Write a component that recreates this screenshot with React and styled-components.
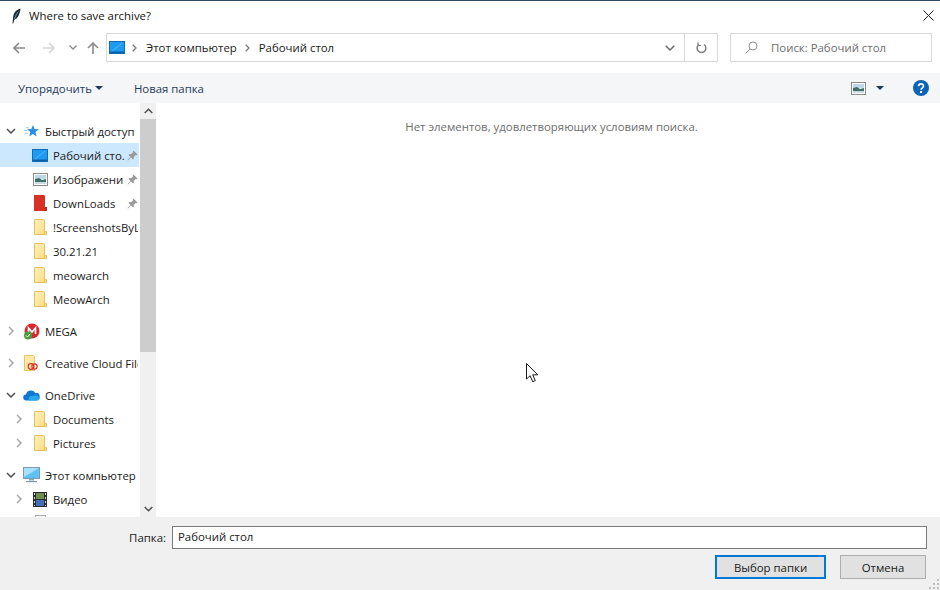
import React from "react";
import styled, { createGlobalStyle } from "styled-components";

const Global = createGlobalStyle`
  html, body { margin: 0; padding: 0; background: #fff; }
  body { font-family: "Open Sans", "Noto Sans", "Liberation Sans", sans-serif; font-size: 11.4px; color: #1a1a1a; }
  * { box-sizing: border-box; }
`;

const Dialog = styled.div`
  position: relative;
  width: 940px;
  height: 590px;
  display: flex;
  flex-direction: column;
  overflow: hidden;
  background: #fff;
  border-top: 1px solid #2b4a5e;
`;
const TitleBar = styled.div`
  height: 29px;
  display: flex;
  align-items: center;
  padding: 0 6px 0 12px;
  flex: none;
`;
const TitleText = styled.div`
  margin-left: 8px;
  flex: 1;
  color: #111;
`;
const NavBar = styled.div`
  height: 43px;
  display: flex;
  align-items: center;
  flex: none;
  padding: 0 8px 8px 13px;
`;
const NavButton = styled.div`
  display: flex;
  width: ${p => p.$w}px;
  margin-right: ${p => p.$mr || 0}px;
  flex: none;
`;
const AddressBox = styled.div`
  width: 612px;
  height: 29px;
  border: 1px solid #d9d9d9;
  display: flex;
  align-items: center;
  flex: none;
  padding-left: 2px;
`;
const Crumb = styled.span`
  color: #1a1a1a;
  margin: 0 8px 0 9px;
`;
const Spacer = styled.div`
  flex: 1;
`;
const AddressEnd = styled.div`
  width: 33px;
  height: 100%;
  border-left: 1px solid #d9d9d9;
  display: flex;
  align-items: center;
  justify-content: center;
  margin-left: 9px;
`;
const SearchBox = styled.div`
  width: 202px;
  height: 29px;
  margin-left: 12px;
  border: 1px solid #d9d9d9;
  display: flex;
  align-items: center;
  padding-left: 14px;
  color: #6d6d6d;
  flex: none;
`;
const SearchLabel = styled.span`
  margin-left: 13px;
`;
const Toolbar = styled.div`
  height: 30px;
  flex: none;
  background: #f5f6f7;
  display: flex;
  align-items: center;
  padding: 0 11px 0 18px;
  color: #1e3a5f;
`;
const ToolText = styled.span`
  margin: 0 ${p => p.$mr || 0}px 0 ${p => p.$ml || 0}px;
`;
const ToolCaret = styled.span`
  display: flex;
  margin: 0 ${p => p.$mr || 0}px 0 ${p => p.$ml || 0}px;
`;
const Main = styled.div`
  flex: 1;
  min-height: 0;
  display: flex;
  overflow: hidden;
`;
const Tree = styled.div`
  width: 140px;
  flex: none;
  overflow: hidden;
  padding-top: 16px;
`;
const Row = styled.div`
  height: 24px;
  display: flex;
  align-items: center;
  background: ${p => (p.$selected ? "#cce8ff" : "transparent")};
  margin-bottom: ${p => (p.$gap ? 8 : 0)}px;
  width: 139px;
  white-space: nowrap;
`;
const Arrow = styled.div`
  width: 10px;
  margin-left: ${p => (p.$sub ? 14 : 6)}px;
  flex: none;
  display: flex;
  justify-content: center;
`;
const IconSlot = styled.div`
  width: 20px;
  margin: 0 ${p => (p.$sub ? 3 : 4)}px 0 ${p => (p.$sub ? 6 : 5)}px;
  flex: none;
  display: flex;
  justify-content: center;
`;
const Label = styled.div`
  flex: 1;
  min-width: 0;
  overflow: hidden;
  color: #1a1a1a;
  margin-right: 1px;
`;
const PinSlot = styled.div`
  width: 12px;
  flex: none;
  display: flex;
  justify-content: flex-start;
`;
const Scrollbar = styled.div`
  width: 16px;
  flex: none;
  background: #f0f0f0;
  display: flex;
  flex-direction: column;
  align-items: center;
`;
const ScrollArrow = styled.div`
  height: 16px;
  flex: none;
  display: flex;
  align-items: center;
  justify-content: center;
`;
const Thumb = styled.div`
  width: 16px;
  height: 233px;
  background: #cdcdcd;
  flex: none;
`;
const Content = styled.div`
  flex: 1;
  margin-left: 2px;
  padding-top: 16px;
  text-align: center;
  color: #6d6d6d;
  padding-left: 5px;
`;
const Footer = styled.div`
  height: 73px;
  flex: none;
  background: #f0f0f0;
  padding: 9px 13px 0 0;
  display: flex;
  flex-direction: column;
  align-items: flex-end;
`;
const FieldRow = styled.div`
  display: flex;
  align-items: center;
`;
const FieldLabel = styled.span`
  margin-right: 6px;
`;
const Field = styled.div`
  width: 755px;
  height: 23px;
  background: #fff;
  border: 1px solid #7a7a7a;
  padding-left: 5px;
  line-height: 20px;
`;
const Buttons = styled.div`
  display: flex;
  margin-top: 6px;
  gap: 14px;
  margin-right: 1px;
`;
const Button = styled.div`
  width: ${p => p.$w}px;
  height: 24px;
  background: #e1e1e1;
  border: ${p => (p.$primary ? "2px solid #0078d7" : "1px solid #adadad")};
  display: flex;
  align-items: center;
  justify-content: center;
`;
const Grip = styled.svg`
  position: absolute;
  right: 1px;
  bottom: 1px;
`;
const Pointer = styled.svg`
  position: absolute;
  left: 526px;
  top: 362px;
`;
const Sep = styled.svg`
  flex: none;
  margin-left: ${p => p.$ml || 0}px;
`;

const Chevron = ({ open }) => (
  <svg width="10" height="10" viewBox="0 0 10 10" fill="none" stroke={open ? "#4d4d4d" : "#a6a6a6"} strokeWidth="1.5">
    {open ? <path d="M1 3l4 4 4-4" /> : <path d="M3 1l4 4-4 4" />}
  </svg>
);
const Folder = () => (
  <svg width="13" height="16" viewBox="0 0 13 16">
    <defs>
      <linearGradient id="fold" x1="0" y1="0" x2="1" y2="1">
        <stop offset="0" stopColor="#fff2bf" />
        <stop offset="1" stopColor="#fbdc82" />
      </linearGradient>
    </defs>
    <path d="M.5 .5h9l1 1v14H.5z" fill="url(#fold)" stroke="#e8c25e" />
    <path d="M10.5 12.5h2v3h-2z" fill="#fbd976" stroke="#e8c25e" />
  </svg>
);
const Desktop = ({ w = 16, h = 13 }) => (
  <svg width={w} height={h} viewBox="0 0 16 13">
    <rect x="0.5" y="0.5" width="15" height="12" fill="#1e9bf0" stroke="#0f6cb8" />
    <path d="M2 11L13 2" stroke="#4cb8f8" strokeWidth="1" />
    <rect x="1" y="10.5" width="14" height="1.5" fill="#0b5fa5" />
  </svg>
);
const PicturesIcon = () => (
  <svg width="15" height="13" viewBox="0 0 15 13">
    <rect x="0.5" y="0.5" width="14" height="12" fill="#fff" stroke="#8a8a8a" />
    <rect x="2" y="2" width="11" height="4" fill="#bcd8ea" />
    <path d="M2 6l4-1 3 2 4-1v5H2z" fill="#3f6f68" />
    <rect x="2" y="9" width="11" height="2" fill="#c8dbe0" />
  </svg>
);
const Star = () => (
  <svg width="15" height="15" viewBox="0 0 16 16">
    <path d="M9.5 1l1.7 4.3 4.6.3-3.5 3 1.1 4.6-3.9-2.5-3.9 2.5 1.1-4.6L3.2 5.6l4.6-.3z" fill="#2c8fe0" />
    <path d="M2 4h3M0 7h3M1 10h3" stroke="#8ac4ee" strokeWidth="1" />
  </svg>
);
const RedFolder = () => (
  <svg width="13" height="16" viewBox="0 0 13 16">
    <path d="M0 0h10l1 1v15H0z" fill="#d93025" />
    <path d="M11 12h2v4h-2z" fill="#b8281f" />
  </svg>
);
const Mega = () => (
  <svg width="17" height="17" viewBox="0 0 17 17">
    <circle cx="9" cy="8" r="7.5" fill="#d9272e" />
    <path d="M5.5 11V5l3.5 4 3.5-4v6" fill="none" stroke="#fff" strokeWidth="1.6" />
    <circle cx="5" cy="12.5" r="4" fill="#4a9d3f" />
    <path d="M3 12.5l1.5 1.5 2.5-3" fill="none" stroke="#fff" strokeWidth="1" />
  </svg>
);
const Creative = () => (
  <svg width="14" height="16" viewBox="0 0 14 16">
    <path d="M.5 .5h9l1 1v14H.5z" fill="#fde8a6" stroke="#e6c468" />
    <circle cx="7" cy="11.5" r="2.8" fill="none" stroke="#d9342b" strokeWidth="1.2" />
    <circle cx="10.5" cy="11.5" r="2.6" fill="none" stroke="#d9342b" strokeWidth="1.2" />
  </svg>
);
const Cloud = () => (
  <svg width="17" height="12" viewBox="0 0 17 12">
    <path d="M3.5 11.5a3 3 0 0 1-.5-6 5 5 0 0 1 9.2-1.6A3.8 3.8 0 0 1 13.5 11.5z" fill="#0f78d4" />
    <path d="M6 11.5c-1.5-3 1-5 3.5-4.5 2-1.5 6-1 7 2 .5 1.5-1 2.5-2 2.5z" fill="#28a8ea" />
  </svg>
);
const Monitor = () => (
  <svg width="17" height="16" viewBox="0 0 17 16">
    <rect x="0.5" y="0.5" width="16" height="11" fill="#5cc2f5" stroke="#7a9bb0" />
    <path d="M1 1h15L1 10z" fill="#a8e0fa" />
    <path d="M6 12h5v1.5H6z" fill="#8fa5b3" />
    <path d="M3 14h11v1.2H3z" fill="#7a97aa" />
  </svg>
);
const Film = () => (
  <svg width="14" height="15" viewBox="0 0 14 15">
    <rect width="14" height="15" fill="#2b2b2b" />
    <rect x="3" y="1" width="8" height="6" fill="#6a8f4e" />
    <rect x="3" y="8" width="8" height="6" fill="#3e6fb8" />
    <path d="M1 1h1v2H1zM1 5h1v2H1zM1 9h1v2H1zM1 13h1v1H1zM12 1h1v2h-1zM12 5h1v2h-1zM12 9h1v2h-1zM12 13h1v1h-1z" fill="#ddd" />
  </svg>
);
const Doc = () => (
  <svg width="11" height="16" viewBox="0 0 11 16">
    <rect x="0.5" y="0.5" width="10" height="15" fill="#fafafa" stroke="#a9a9a9" />
  </svg>
);
const Pin = () => (
  <svg width="11" height="11" viewBox="0 0 11 11" fill="#9a9a9a">
    <path d="M6.5 0.5l4 4-1 .7-.8-.3-2 2 .2 1.8-.9.8-2-2-3 3-.5-.5 3-3-2-2 .8-.9 1.8.2 2-2-.3-.8z" />
  </svg>
);
const Caret = () => (
  <svg width="8" height="4" viewBox="0 0 8 4"><path d="M0 0h8L4 4z" fill="#1e3a5f" /></svg>
);

const items = [
  { id: "quick", t: "Быстрый доступ", arrow: "open", icon: <Star /> },
  { id: "desk", t: "Рабочий сто.", sub: 1, icon: <Desktop />, pin: 1, sel: 1 },
  { id: "img", t: "Изображени", sub: 1, icon: <PicturesIcon />, pin: 1 },
  { id: "dl", t: "DownLoads", sub: 1, icon: <RedFolder />, pin: 1 },
  { id: "shots", t: "!ScreenshotsByLi", sub: 1, icon: <Folder /> },
  { id: "date", t: "30.21.21", sub: 1, icon: <Folder /> },
  { id: "meow1", t: "meowarch", sub: 1, icon: <Folder /> },
  { id: "meow2", t: "MeowArch", sub: 1, icon: <Folder />, gap: 1 },
  { id: "mega", t: "MEGA", arrow: "closed", icon: <Mega />, gap: 1 },
  { id: "cc", t: "Creative Cloud Files", arrow: "closed", icon: <Creative />, gap: 1 },
  { id: "od", t: "OneDrive", arrow: "open", icon: <Cloud /> },
  { id: "docs", t: "Documents", sub: 1, arrow: "closed", icon: <Folder /> },
  { id: "pics", t: "Pictures", sub: 1, arrow: "closed", icon: <Folder />, gap: 1 },
  { id: "pc", t: "Этот компьютер", arrow: "open", icon: <Monitor /> },
  { id: "video", t: "Видео", sub: 1, arrow: "closed", icon: <Film /> },
  { id: "next", t: "", sub: 1, icon: <Doc /> },
];

export default function App() {
  return (
    <>
      <Global />
      <Dialog>
        <TitleBar>
          <svg width="9" height="16" viewBox="0 0 9 16">
            <path d="M8.5 0.5C4.5 1.5 1.5 4.5 1 10L.5 15.5l1-.2.6-3.5C5.5 11 8 6 8.5 .5z" fill="#1d2a38" />
            <path d="M6.5 3.5C4.5 5.5 3.5 8 2.5 11" stroke="#8fb0cc" strokeWidth="0.8" fill="none" />
          </svg>
          <TitleText>Where to save archive?</TitleText>
          <svg width="11" height="11" viewBox="0 0 11 11" stroke="#1a1a1a" strokeWidth="1">
            <path d="M0.5 0.5l10 10M10.5 0.5l-10 10" />
          </svg>
        </TitleBar>
        <NavBar>
          <NavButton $w={12} $mr={18}>
            <svg width="12" height="12" viewBox="0 0 12 12" fill="none" stroke="#8a8a8a" strokeWidth="1.6"><path d="M12 6H1.2M6 1L1 6l5 5" /></svg>
          </NavButton>
          <NavButton $w={12} $mr={14}>
            <svg width="12" height="12" viewBox="0 0 12 12" fill="none" stroke="#d6d6d6" strokeWidth="1.6"><path d="M0 6h10.8M6 1l5 5-5 5" /></svg>
          </NavButton>
          <NavButton $w={8} $mr={10}>
            <svg width="8" height="5" viewBox="0 0 8 5" fill="none" stroke="#8a8a8a" strokeWidth="1.3"><path d="M.5 .5L4 4 7.5 .5" /></svg>
          </NavButton>
          <NavButton $w={12} $mr={7}>
            <svg width="12" height="12" viewBox="0 0 12 12" fill="none" stroke="#8a8a8a" strokeWidth="1.6"><path d="M6 12V1.2M1 6l5-5 5 5" /></svg>
          </NavButton>
          <AddressBox>
            <Desktop />
            <Sep $ml={7} width="5" height="8" viewBox="0 0 5 8" fill="none" stroke="#7a7a7a" strokeWidth="1.3"><path d="M.7 .7L4 4 .7 7.3" /></Sep>
            <Crumb>Этот компьютер</Crumb>
            <Sep width="5" height="8" viewBox="0 0 5 8" fill="none" stroke="#7a7a7a" strokeWidth="1.3"><path d="M.7 .7L4 4 .7 7.3" /></Sep>
            <Crumb>Рабочий стол</Crumb>
            <Spacer />
            <svg width="10" height="6" viewBox="0 0 10 6" fill="none" stroke="#6d6d6d" strokeWidth="1.5"><path d="M.7 .7L5 5 9.3 .7" /></svg>
            <AddressEnd>
              <svg width="11" height="12" viewBox="0 0 11 12" fill="none" stroke="#7d7d7d" strokeWidth="1.5">
                <path d="M3 2.5a4.4 4.4 0 1 0 5 0" />
                <path d="M2 .5v3h3" strokeWidth="1.2" />
              </svg>
            </AddressEnd>
          </AddressBox>
          <SearchBox>
            <svg width="13" height="13" viewBox="0 0 13 13" fill="none" stroke="#8f8f8f" strokeWidth="1">
              <circle cx="8" cy="5" r="4" />
              <path d="M5 8l-4.5 4.5" />
            </svg>
            <SearchLabel>Поиск: Рабочий стол</SearchLabel>
          </SearchBox>
        </NavBar>
        <Toolbar>
          <ToolText $mr={3}>Упорядочить</ToolText>
          <Caret />
          <ToolText $ml={31}>Новая папка</ToolText>
          <Spacer />
          <PicturesIcon />
          <ToolCaret $ml={10} $mr={29}><Caret /></ToolCaret>
          <svg width="16" height="16" viewBox="0 0 16 16">
            <circle cx="8" cy="8" r="8" fill="#0a63b5" />
            <path d="M5.6 6.2c0-3 4.9-3 4.9-.2 0 1.8-2.4 1.9-2.4 3.7" fill="none" stroke="#fff" strokeWidth="1.7" />
            <rect x="7.1" y="11" width="2" height="2" fill="#fff" />
          </svg>
        </Toolbar>
        <Main>
          <Tree>
            {items.map(i => (
              <Row key={i.id} $selected={i.sel} $gap={i.gap}>
                <Arrow $sub={i.sub}>{i.arrow && <Chevron open={i.arrow === "open"} />}</Arrow>
                <IconSlot $sub={i.sub}>{i.icon}</IconSlot>
                <Label>{i.t}</Label>
                {i.pin && <PinSlot><Pin /></PinSlot>}
              </Row>
            ))}
          </Tree>
          <Scrollbar>
            <ScrollArrow>
              <svg width="9" height="6" viewBox="0 0 9 6" fill="none" stroke="#505050" strokeWidth="1.5"><path d="M.7 5L4.5 1.2 8.3 5" /></svg>
            </ScrollArrow>
            <Thumb />
            <Spacer />
            <ScrollArrow>
              <svg width="9" height="6" viewBox="0 0 9 6" fill="none" stroke="#505050" strokeWidth="1.5"><path d="M.7 1L4.5 4.8 8.3 1" /></svg>
            </ScrollArrow>
          </Scrollbar>
          <Content>Нет элементов, удовлетворяющих условиям поиска.</Content>
        </Main>
        <Footer>
          <FieldRow>
            <FieldLabel>Папка:</FieldLabel>
            <Field>Рабочий стол</Field>
          </FieldRow>
          <Buttons>
            <Button $w={111} $primary>Выбор папки</Button>
            <Button $w={86}>Отмена</Button>
          </Buttons>
        </Footer>
        <Grip width="10" height="10" viewBox="0 0 10 10" fill="#bdbdbd">
          <path d="M8 0h2v2H8zM4 4h2v2H4zM8 4h2v2H8zM0 8h2v2H0zM4 8h2v2H4zM8 8h2v2H8z" />
        </Grip>
        <Pointer width="13" height="21" viewBox="0 0 13 21">
          <path d="M.5 .5v15.5l3.6-3.3 2.6 6 2.6-1.1-2.6-5.8h5z" fill="#fff" stroke="#1a1a1a" strokeWidth="1" strokeLinejoin="miter" />
        </Pointer>
      </Dialog>
    </>
  );
}
